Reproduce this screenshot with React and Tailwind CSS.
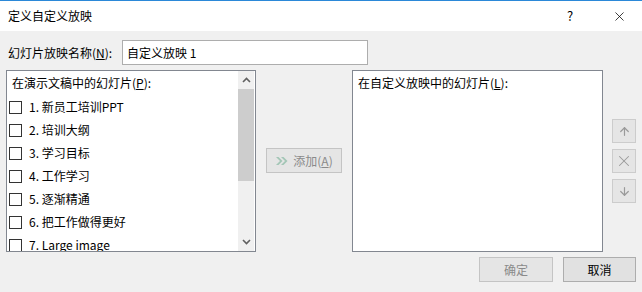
import { X, ArrowUp, ArrowDown } from "lucide-react"

const slides = [
  "1. 新员工培训PPT",
  "2. 培训大纲",
  "3. 学习目标",
  "4. 工作学习",
  "5. 逐渐精通",
  "6. 把工作做得更好",
  "7. Large image",
]

const font = { fontFamily: '"Noto Sans CJK SC", "Liberation Sans", sans-serif' }

const Chevron = ({ up }) => (
  <svg width="9" height="6" viewBox="0 0 9 6">
    <path d={up ? "M1 5 L4.5 1.5 L8 5" : "M1 1 L4.5 4.5 L8 1"} fill="none" stroke="#606060" strokeWidth="1.6" />
  </svg>
)

const SideButton = ({ children }) => (
  <div className="w-[24px] h-[24px] flex items-center justify-center bg-[#e5e5e5] border border-[#cccccc] text-[#9a9a9a]">
    {children}
  </div>
)

const App = () => {
  return (
    <div className="w-[642px] h-[292px] bg-[#f0f0f0] overflow-hidden text-[12px] text-black" style={font}>
      {/* title bar */}
      <div className="h-[31px] bg-white border-t border-[#2b88d8] flex items-center">
        <span className="ml-[8px] flex-1">定义自定义放映</span>
        <span className="w-[12px] text-center mr-[36px] text-[13px]">?</span>
        <X size={15} strokeWidth={1.2} className="mr-[15px]" />
      </div>

      {/* name row */}
      <div className="flex items-center mt-[9px] h-[25px]">
        <label className="ml-[8px] w-[114px]">幻灯片放映名称(<span className="underline">N</span>):</label>
        <div className="w-[246px] h-[25px] bg-white border border-[#adadad] flex items-center pl-[4px]">
          自定义放映 1
        </div>
      </div>

      {/* lists */}
      <div className="flex mt-[5px] pl-[6px] h-[182px]">
        <div className="w-[250px] h-full bg-white border border-[#828790] flex">
          <div className="flex-1 overflow-hidden">
            <div className="h-[24px] flex items-center pl-[5px]">
              在演示文稿中的幻灯片(<span className="underline">P</span>):
            </div>
            {slides.map((s) => (
              <div key={s} className="h-[23px] flex items-center pl-[2px] pt-[1px]">
                <span className="w-[13px] h-[13px] border border-[#333333] bg-white shrink-0" />
                <span className="ml-[7px]">{s}</span>
              </div>
            ))}
          </div>
          <div className="w-[16px] mr-[1px] bg-[#f0f0f0] flex flex-col">
            <div className="h-[18px] flex items-center justify-center">
              <Chevron up />
            </div>
            <div className="h-[92px] bg-[#cdcdcd]" />
            <div className="flex-1" />
            <div className="h-[18px] flex items-center justify-center">
              <Chevron />
            </div>
          </div>
        </div>

        <div className="ml-[10px] mt-[78px] w-[76px] h-[25px] bg-[#e5e5e5] border border-[#c4c4c4] flex items-center justify-center gap-[4px] text-[#8a8a8a]">
          <svg width="14" height="8" viewBox="0 0 14 8">
            <path d="M1 0 L5 4 L1 8 L3.5 8 L7.5 4 L3.5 0 Z" fill="#a3c6b6" />
            <path d="M6 0 L10 4 L6 8 L8.5 8 L12.5 4 L8.5 0 Z" fill="#a3c6b6" />
          </svg>
          <span>添加(<span className="underline">A</span>)</span>
        </div>

        <div className="ml-[10px] w-[251px] h-full bg-white border border-[#828790]">
          <div className="h-[24px] flex items-center pl-[5px]">
            在自定义放映中的幻灯片(<span className="underline">L</span>):
          </div>
        </div>

        <div className="ml-[9px] mt-[49px] flex flex-col gap-[6px]">
          <SideButton><ArrowUp size={13} strokeWidth={2.2} /></SideButton>
          <SideButton><X size={18} strokeWidth={1.4} /></SideButton>
          <SideButton><ArrowDown size={13} strokeWidth={2.2} /></SideButton>
        </div>
      </div>

      {/* footer buttons */}
      <div className="flex justify-end gap-[10px] mt-[5px] pr-[6px]">
        <div className="w-[74px] h-[25px] bg-[#e5e5e5] border border-[#c4c4c4] flex items-center justify-center text-[#8a8a8a]">
          确定
        </div>
        <div className="w-[73px] h-[25px] bg-[#e1e1e1] border border-[#adadad] flex items-center justify-center">
          取消
        </div>
      </div>
    </div>
  )
}

export default App
